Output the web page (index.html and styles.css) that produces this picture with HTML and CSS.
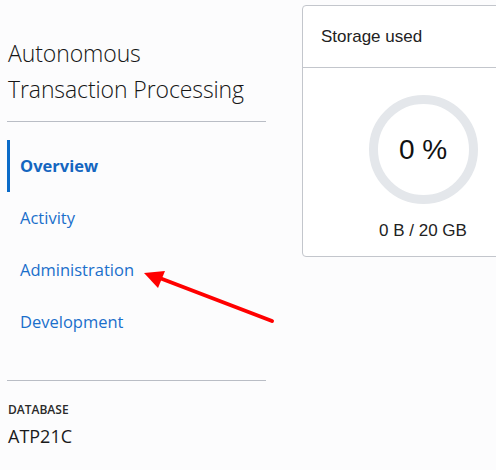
FILE: index.html
```html
<!DOCTYPE html>
<html>
<head>
<meta charset="utf-8">
<link rel="stylesheet" href="styles.css">
</head>
<body>
<div class="page">
  <aside class="side">
    <h1 class="title">Autonomous<br>Transaction Processing</h1>
    <nav class="nav">
      <a class="nav-item active">Overview</a>
      <a class="nav-item">Activity</a>
      <a class="nav-item">Administration</a>
      <a class="nav-item">Development</a>
    </nav>
    <div class="meta">
      <div class="meta-label">DATABASE</div>
      <div class="meta-value">ATP21C</div>
    </div>
  </aside>
  <section class="card">
    <div class="card-head">Storage used</div>
    <div class="card-body">
      <div class="ring"><span>0 %</span></div>
      <div class="usage">0 B / 20 GB</div>
    </div>
  </section>
  <svg class="arrow" width="140" height="60" viewBox="0 0 140 60">
    <line x1="131" y1="51" x2="16" y2="7" stroke="#ff0000" stroke-width="4" stroke-linecap="round"/>
    <polygon points="3,3 24,1 17,18" fill="#ff0000"/>
  </svg>
</div>
</body>
</html>
```
FILE: styles.css
```css
html, body {
  margin: 0;
  padding: 0;
  background: #fcfcfd;
}
.page {
  position: relative;
  display: flex;
  align-items: flex-start;
  width: 496px;
  height: 470px;
  overflow: hidden;
}
.side {
  flex-shrink: 0;
  width: 259px;
  margin-left: 7px;
  font-family: "Open Sans", "Noto Sans", sans-serif;
}
.title {
  margin: 35px 0 0 0;
  padding-left: 1px;
  font-size: 23px;
  font-weight: 300;
  line-height: 36px;
  color: #161616;
  padding-bottom: 14px;
  border-bottom: 1px solid #b9bdc5;
  letter-spacing: -0.1px;
  white-space: nowrap;
}
.nav {
  display: flex;
  flex-direction: column;
  margin-top: 18px;
  padding-bottom: 32px;
  border-bottom: 1px solid #b9bdc5;
}
.nav-item {
  display: block;
  height: 52px;
  line-height: 52px;
  padding-left: 13px;
  font-size: 16.5px;
  color: #1a6fcb;
}
.nav-item.active {
  font-weight: 700;
  border-left: 3px solid #0a6bc8;
  padding-left: 10px;
  color: #1466c0;
}
.meta {
  padding: 20px 0 0 1px;
}
.meta-label {
  font-size: 12px;
  font-weight: 600;
  color: #2a2a2a;
  line-height: 17px;
}
.meta-value {
  margin-top: 5px;
  font-size: 18px;
  color: #1a1a1a;
  line-height: 26px;
}
.card {
  flex-shrink: 0;
  margin-left: 36px;
  margin-top: 5px;
  width: 240px;
  height: 250px;
  background: #ffffff;
  border: 1px solid #c3c6cc;
  border-radius: 4px;
  font-family: "Liberation Sans", Arial, sans-serif;
}
.card-head {
  height: 61px;
  line-height: 62px;
  padding-left: 18px;
  font-size: 17px;
  color: #222;
  border-bottom: 1px solid #c3c6cc;
}
.card-body {
  display: flex;
  flex-direction: column;
  align-items: center;
  padding-top: 27px;
}
.ring {
  width: 91px;
  height: 91px;
  border: 9px solid #e4e7eb;
  border-radius: 50%;
  display: flex;
  align-items: center;
  justify-content: center;
  font-size: 28px;
  color: #111;
}
.usage {
  margin-top: 17px;
  font-size: 17px;
  color: #222;
}
.arrow {
  position: absolute;
  left: 141px;
  top: 270px;
}
```
